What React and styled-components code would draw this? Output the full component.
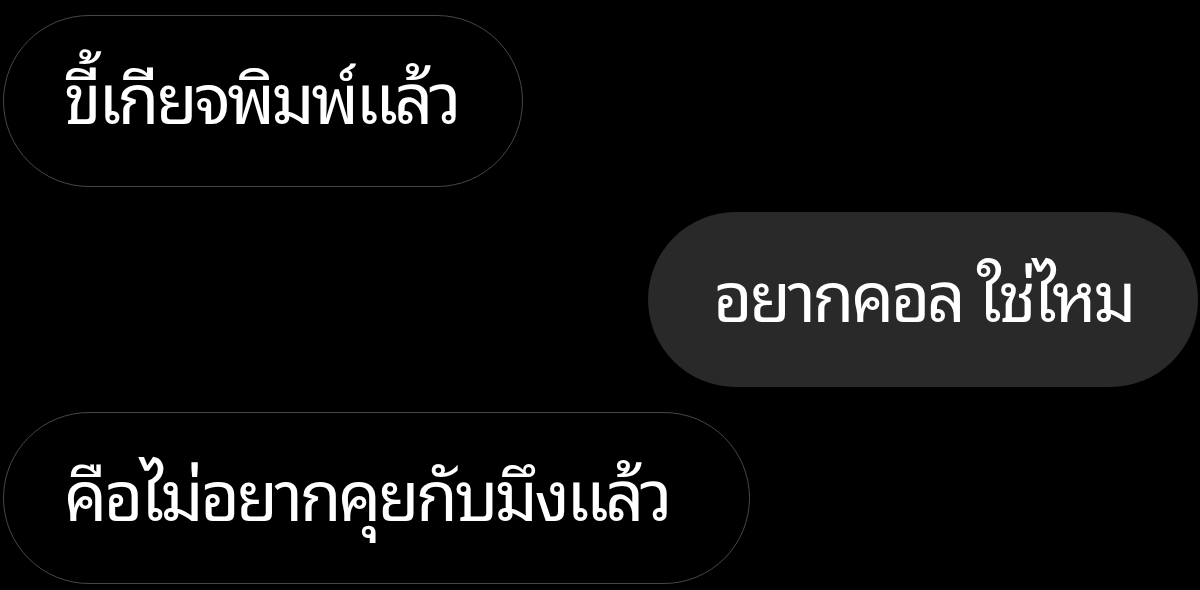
import React from "react";
import styled, { createGlobalStyle } from "styled-components";

const Global = createGlobalStyle`
  html, body { margin: 0; padding: 0; background: #000; }
  body { width: 1200px; height: 590px; overflow: hidden; }
`;

const Thread = styled.div`
  display: flex;
  flex-direction: column;
  gap: 25px;
  padding: 15px 2px 0 3px;
  font-family: "Noto Sans Thai Looped", sans-serif;
`;

const Row = styled.div`
  display: flex;
  justify-content: ${(p) => (p.$mine ? "flex-end" : "flex-start")};
`;

const Bubble = styled.div`
  box-sizing: border-box;
  height: ${(p) => (p.$mine ? 175 : 172)}px;
  width: ${(p) => p.$w}px;
  border-radius: 90px;
  display: flex;
  align-items: center;
  padding: 0 0 16px ${(p) => p.$pad}px;
  color: #fff;
  font-size: 68px;
  letter-spacing: -3.5px;
  background: ${(p) => (p.$mine ? "#292929" : "#000")};
  border: ${(p) => (p.$mine ? "none" : "1.5px solid #474747")};
  white-space: nowrap;
`;

export default function App() {
  return (
    <>
      <Global />
      <Thread>
        <Row>
          <Bubble $w={520} $pad={60}>ขี้เกียจพิมพ์แล้ว</Bubble>
        </Row>
        <Row $mine>
          <Bubble $mine $w={550} $pad={65}>อยากคอล ใช่ไหม</Bubble>
        </Row>
        <Row>
          <Bubble $w={747} $pad={60}>คือไม่อยากคุยกับมึงแล้ว</Bubble>
        </Row>
      </Thread>
    </>
  );
}
